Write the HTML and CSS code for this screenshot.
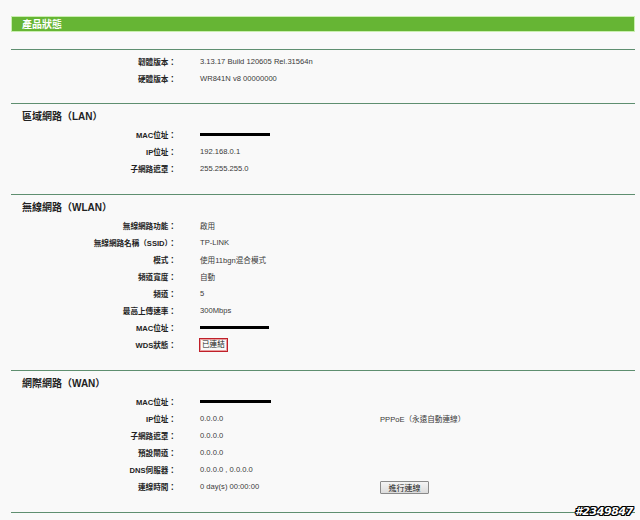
FILE: index.html
```html
<!DOCTYPE html>
<html lang="zh-Hant">
<head>
<meta charset="utf-8">
<title>產品狀態</title>
<link rel="stylesheet" href="styles.css">
</head>
<body>
<div class="page">
  <div class="title">產品狀態</div>

  <div class="section first">
    <div class="row"><div class="label">韌體版本：</div><div class="value">3.13.17 Build 120605 Rel.31564n</div></div>
    <div class="row"><div class="label">硬體版本：</div><div class="value">WR841N v8 00000000</div></div>
  </div>

  <div class="section">
    <div class="heading">區域網路（LAN）</div>
    <div class="row"><div class="label">MAC位址：</div><div class="value"><span class="redact w70"></span></div></div>
    <div class="row"><div class="label">IP位址：</div><div class="value">192.168.0.1</div></div>
    <div class="row"><div class="label">子網路遮罩：</div><div class="value">255.255.255.0</div></div>
  </div>

  <div class="section">
    <div class="heading">無線網路（WLAN）</div>
    <div class="row"><div class="label">無線網路功能：</div><div class="value">啟用</div></div>
    <div class="row"><div class="label">無線網路名稱（SSID）：</div><div class="value">TP-LINK</div></div>
    <div class="row"><div class="label">模式：</div><div class="value">使用11bgn混合模式</div></div>
    <div class="row"><div class="label">頻道寬度：</div><div class="value">自動</div></div>
    <div class="row"><div class="label">頻道：</div><div class="value">5</div></div>
    <div class="row"><div class="label">最高上傳速率：</div><div class="value">300Mbps</div></div>
    <div class="row"><div class="label">MAC位址：</div><div class="value"><span class="redact w69"></span></div></div>
    <div class="row"><div class="label">WDS狀態：</div><div class="value"><span class="boxed">已連結</span></div></div>
  </div>

  <div class="section">
    <div class="heading">網際網路（WAN）</div>
    <div class="row"><div class="label">MAC位址：</div><div class="value"><span class="redact w71"></span></div></div>
    <div class="row"><div class="label">IP位址：</div><div class="value">0.0.0.0</div><div class="extra">PPPoE（永遠自動連線）</div></div>
    <div class="row"><div class="label">子網路遮罩：</div><div class="value">0.0.0.0</div></div>
    <div class="row"><div class="label">預設閘道：</div><div class="value">0.0.0.0</div></div>
    <div class="row"><div class="label">DNS伺服器：</div><div class="value">0.0.0.0 , 0.0.0.0</div></div>
    <div class="row"><div class="label">連線時間：</div><div class="value">0 day(s) 00:00:00</div><div class="extra"><button class="btn" type="button">進行連線</button></div></div>
  </div>
  <div class="section end"></div>
</div>
<div class="watermark">#2349847</div>
</body>
</html>
```

FILE: styles.css
```css
html, body {
  margin: 0;
  padding: 0;
}
body {
  background: #f9f9f9;
  font-family: "Liberation Sans", Arial, "Noto Sans CJK TC", sans-serif;
  color: #333;
  position: relative;
  width: 640px;
  height: 520px;
  overflow: hidden;
}
.page {
  margin-left: 11px;
  width: 624px;
  padding-top: 16px;
}
.title {
  height: 16px;
  box-sizing: border-box;
  background: #66b534;
  border: 1px solid #c9efb0;
  color: #fff;
  font-family: "Noto Sans CJK TC", sans-serif;
  font-weight: bold;
  font-size: 10px;
  line-height: 14px;
  padding-left: 10px;
  margin-bottom: 17px;
}
.section {
  border-top: 1px solid #5f8f70;
  padding: 4px 0 17px;
}
.section.first {
  padding-top: 3px;
  padding-bottom: 16px;
}
.section.end {
  padding: 0;
}
.heading {
  height: 18px;
  line-height: 18px;
  padding-left: 11px;
  font-family: "Liberation Sans", Arial, "Noto Sans CJK TC", sans-serif;
  font-weight: bold;
  font-size: 10px;
  color: #222;
}
.row {
  display: flex;
  height: 17px;
  align-items: center;
  font-size: 7.6px;
}
.label {
  width: 165px;
  text-align: right;
  font-weight: bold;
  color: #222;
  font-family: "Liberation Sans", Arial, "Noto Sans CJK TC", sans-serif;
}
.value {
  width: 180px;
  margin-left: 24px;
  color: #3a3a3a;
  display: flex;
  align-items: center;
}
.extra {
  color: #3a3a3a;
  display: flex;
  align-items: center;
}
.redact {
  display: inline-block;
  height: 3px;
  background: #000;
}
.w70 { width: 70px; }
.w69 { width: 69px; }
.w71 { width: 71px; }
.boxed {
  display: inline-block;
  border: 1px solid #c0202a;
  box-shadow: inset 0 0 0 1px #e9a0a0;
  padding: 1px 2px;
  margin-left: -1px;
  color: #222;
  line-height: 10px;
}
.btn {
  font-family: "Noto Sans CJK TC", sans-serif;
  font-size: 8px;
  width: 49px;
  height: 13px;
  padding: 0;
  line-height: 11px;
  color: #222;
  background: linear-gradient(#f4f4f4, #dcdcdc);
  border: 1px solid #8a8a8a;
  border-radius: 1px;
  margin-top: 1px;
}
.watermark {
  position: absolute;
  left: 575px;
  top: 505px;
  font-family: "DejaVu Sans", sans-serif;
  font-weight: bold;
  font-style: italic;
  font-size: 11px;
  line-height: 13px;
  color: #fff;
  letter-spacing: -0.4px;
  text-shadow: 1px 0 0 #000, -1px 0 0 #000, 0 1px 0 #000, 0 -1px 0 #000, 1px 1px 0 #000, -1px -1px 0 #000, 1px -1px 0 #000, -1px 1px 0 #000;
}
```
